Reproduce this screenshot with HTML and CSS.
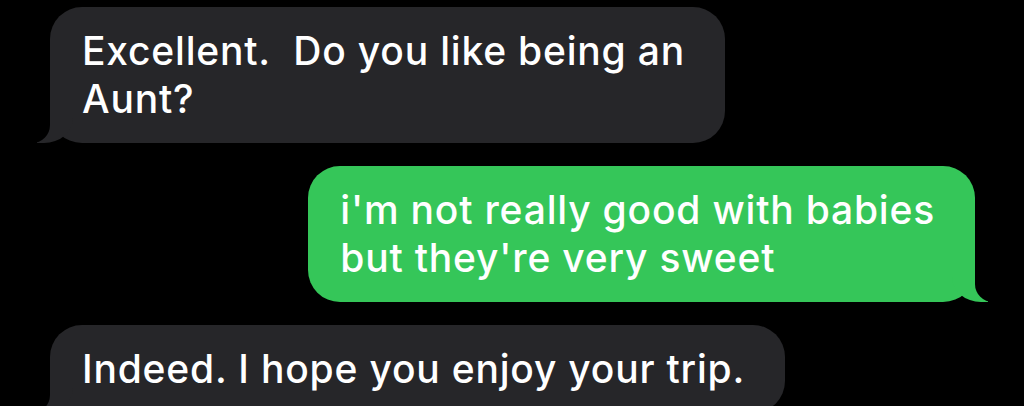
FILE: index.html
```html
<!DOCTYPE html>
<html lang="en">
<head>
    <meta charset="UTF-8">
    <meta name="viewport" content="width=device-width, initial-scale=1.0">
    <title>Messages</title>
    <link rel="stylesheet" href="styles.css">
</head>
<body>
    <div class="thread">
        <p class="bubble them">Excellent.&nbsp; Do you like being an<br>Aunt?</p>
        <p class="bubble me">i'm not really good with babies<br>but they're very sweet</p>
        <p class="bubble them">Indeed. I hope you enjoy your trip.</p>
    </div>
</body>
</html>
```

FILE: styles.css
```css
body {
    margin: 0;
    background-color: #000;
    font-family: 'Inter', 'Helvetica Neue', Arial, sans-serif;
    overflow: hidden;
}

.thread {
    display: flex;
    flex-direction: column;
    gap: 23px;
    padding: 7px 49px 0 50px;
}

.bubble {
    position: relative;
    margin: 0;
    max-width: 760px;
    padding: 20px 40px 20px 32px;
    box-sizing: border-box;
    border-radius: 32px;
    font-size: 39px;
    font-weight: 500;
    letter-spacing: 0.8px;
    line-height: 48px;
    color: #fff;
    white-space: nowrap;
}

.bubble::before,
.bubble::after {
    content: "";
    position: absolute;
    bottom: 0;
    height: 36px;
}

/* received */
.them {
    align-self: flex-start;
    background-color: #262629;
}

.them::before {
    left: -13px;
    width: 36px;
    background-color: #262629;
    border-bottom-right-radius: 29px 25px;
}

.them::after {
    left: -47px;
    width: 47px;
    background-color: #000;
    border-bottom-right-radius: 18px;
}

/* sent */
.me {
    align-self: flex-end;
    background-color: #35c659;
}

.me::before {
    right: -13px;
    width: 36px;
    background-color: #35c659;
    border-bottom-left-radius: 29px 25px;
}

.me::after {
    right: -47px;
    width: 47px;
    background-color: #000;
    border-bottom-left-radius: 18px;
}
```
